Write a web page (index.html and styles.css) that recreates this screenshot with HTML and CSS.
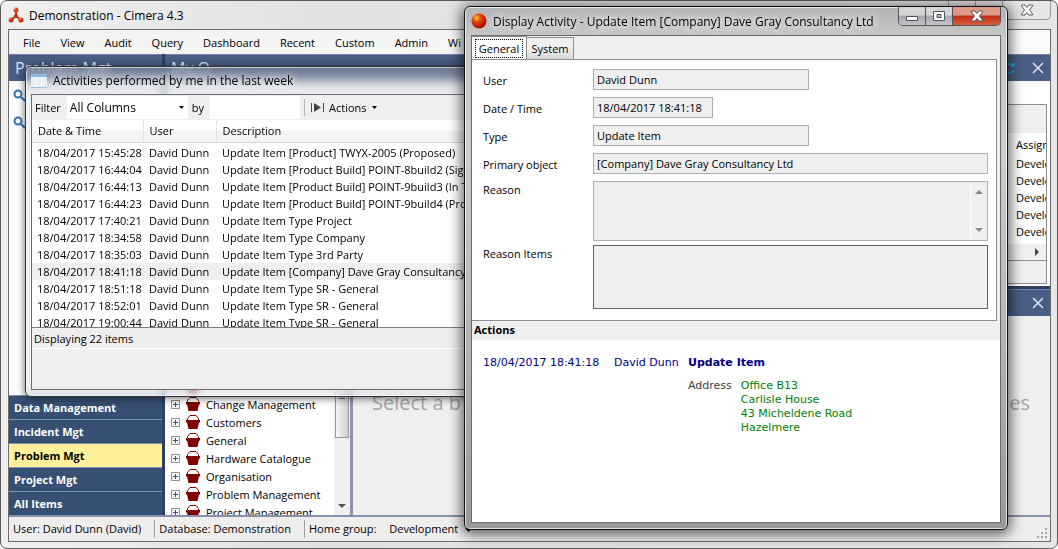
FILE: index.html
```html
<!doctype html>
<html lang="en">
  <head>
    <meta charset="utf-8">
    <meta name="viewport" content="width=device-width">
    <title>Demonstration - Cimera 4.3</title>
    <link rel="stylesheet" href="styles.css">
  </head>
  <body>
    <svg class="defs" width="0" height="0">
      <symbol id="close" viewBox="0 0 14 12">
        <path d="M1.500 1h3.500L7 3.500 9 1h3.500v1L9.500 6l3 4v1H9L7 8.500 5 11H1.500v-1l3-4-3-4z" fill="#fff" stroke="#535666"/>
      </symbol>
      <symbol id="basket" viewBox="0 0 14 14">
        <path d="M1.500 6V3.500L4 .5h6l2.500 3V6" fill="#fff" stroke="#800000"/>
        <path d="M0 5h14v2.500h-1L11.500 14h-9L1 7.500H0z" fill="#800000"/>
      </symbol>
      <symbol id="plus" viewBox="0 0 9 9">
        <path d="M.5.5h8v8h-8z" fill="#f8f8f8" stroke="#919191"/>
        <path d="M2 4.500h5M4.500 2v5" stroke="#3a4c8c"/>
      </symbol>
      <symbol id="search" viewBox="0 0 13 13">
        <circle cx="5" cy="5" r="3.500" fill="none" stroke="#2f74b5" stroke-width="2"/>
        <path d="M8 8l4 4" stroke="#2f74b5" stroke-width="2"/>
      </symbol>
      <symbol id="cross" viewBox="0 0 12 12">
        <path d="M1 1l10 10M11 1L1 11" stroke="#dfe5f2" stroke-width="1.500"/>
      </symbol>
    </svg>

    <div class="main">
      <header class="main-title">
        <svg width="16" height="16" viewBox="0 0 16 16">
          <path d="M8 3v6M8 9l-5 4M8 9l5 4" stroke="#a83a20" stroke-width="2"/>
          <circle cx="8" cy="3" r="2.500" fill="#d8401c"/>
          <circle cx="8" cy="9" r="2" fill="#c83010"/>
          <circle cx="3" cy="13" r="2.500" fill="#d02c10"/>
          <circle cx="13" cy="13" r="2.500" fill="#d02c10"/>
          <circle cx="7" cy="2" r="1" fill="#f4a080"/>
          <circle cx="2" cy="12" r="1" fill="#f4a080"/>
          <circle cx="12" cy="12" r="1" fill="#f4a080"/>
        </svg>
        <span>Demonstration - Cimera 4.3</span>
        <div class="caption-buttons">
          <button aria-label="Minimize"></button>
          <button aria-label="Maximize"></button>
          <button class="wide" aria-label="Close"><svg width="14" height="12"><use href="#close"/></svg></button>
        </div>
      </header>

      <div class="client">
        <nav class="menu">
          <button>File</button>
          <button>View</button>
          <button>Audit</button>
          <button>Query</button>
          <button>Dashboard</button>
          <button>Recent</button>
          <button>Custom</button>
          <button>Admin</button>
          <button>Wi</button>
        </nav>

        <div class="workspace">
          <aside class="sidebar">
            <h2 class="bar">Problem Mgt</h2>
            <div class="searches">
              <svg width="13" height="13"><use href="#search"/></svg>
              <svg width="13" height="13"><use href="#search"/></svg>
            </div>
            <nav class="areas">
              <button>Data Management</button>
              <button>Incident Mgt</button>
              <button class="current">Problem Mgt</button>
              <button>Project Mgt</button>
              <button>All Items</button>
            </nav>
          </aside>

          <div class="panels">
            <section class="queries">
              <h2 class="bar">
                <span>My Q</span>
                <svg class="refresh" width="13" height="13" viewBox="0 0 13 13">
                  <path d="M2 5a5 5 0 0 1 8-2M11 8a5 5 0 0 1-8 2" fill="none" stroke="#3193d1" stroke-width="2"/>
                  <path d="M12 0v5H7zM1 13V8h5z" fill="#3193d1"/>
                </svg>
                <button aria-label="Close panel"><svg width="12" height="12"><use href="#cross"/></svg></button>
              </h2>
              <div class="results">
                <div class="rows">
                  <table>
                    <thead><tr><th>Assign</th></tr></thead>
                    <tbody>
                      <tr><td>Develo</td></tr>
                      <tr><td>Develo</td></tr>
                      <tr><td>Develo</td></tr>
                      <tr><td>Develo</td></tr>
                      <tr><td>Develo</td></tr>
                    </tbody>
                  </table>
                </div>
                <div class="hscroll"><svg width="5" height="8" viewBox="0 0 5 8"><path d="M0 0l4 4-4 4z" fill="#444"/></svg></div>
              </div>
            </section>

            <section class="browser">
              <h2 class="bar">
                <button aria-label="Close panel"><svg width="12" height="12"><use href="#cross"/></svg></button>
              </h2>
              <div class="split">
                <div class="tree">
                  <ul>
                    <li><svg width="9" height="9"><use href="#plus"/></svg><svg width="14" height="14"><use href="#basket"/></svg></li>
                    <li><svg width="9" height="9"><use href="#plus"/></svg><svg width="14" height="14"><use href="#basket"/></svg>Change Management</li>
                    <li><svg width="9" height="9"><use href="#plus"/></svg><svg width="14" height="14"><use href="#basket"/></svg>Customers</li>
                    <li><svg width="9" height="9"><use href="#plus"/></svg><svg width="14" height="14"><use href="#basket"/></svg>General</li>
                    <li><svg width="9" height="9"><use href="#plus"/></svg><svg width="14" height="14"><use href="#basket"/></svg>Hardware Catalogue</li>
                    <li><svg width="9" height="9"><use href="#plus"/></svg><svg width="14" height="14"><use href="#basket"/></svg>Organisation</li>
                    <li><svg width="9" height="9"><use href="#plus"/></svg><svg width="14" height="14"><use href="#basket"/></svg>Problem Management</li>
                    <li><svg width="9" height="9"><use href="#plus"/></svg><svg width="14" height="14"><use href="#basket"/></svg>Project Management</li>
                  </ul>
                  <div class="vscroll">
                    <div class="thumb"><i></i></div>
                    <svg width="8" height="4" viewBox="0 0 8 4"><path d="M0 0h8L4 4z" fill="#555"/></svg>
                  </div>
                </div>
                <div class="hint"><span>Select a b</span><span>ies</span></div>
              </div>
            </section>
          </div>
        </div>

        <footer class="status">
          <span>User: David Dunn (David)</span>
          <span>Database: Demonstration</span>
          <span>Home group: <button>Development <svg width="7" height="4" viewBox="0 0 7 4"><path d="M0 0h7L3.500 4z"/></svg></button></span>
          <svg class="grip" width="11" height="11" viewBox="0 0 11 11">
            <path d="M8 0h2v2H8zM4 4h2v2H4zM8 4h2v2H8zM0 8h2v2H0zM4 8h2v2H4zM8 8h2v2H8z" fill="#a5a5a5"/>
          </svg>
        </footer>
      </div>
    </div>

    <div class="window activities">
      <header>
        <svg width="16" height="16" viewBox="0 0 16 16">
          <path d="M0 1h16v14H0z" fill="#e9eff5"/>
          <path d="M0 1h16v3H0z" fill="#8cb8e4"/>
          <path d="M5 4v11M10.500 4v11" stroke="#fff"/>
          <path d="M0 14.500h16" stroke="#9fc0de"/>
        </svg>
        <span>Activities performed by me in the last week</span>
      </header>
      <div class="client">
        <div class="toolbar">
          <label for="column">Filter</label>
          <div class="pick">
            <select id="column"><option>All Columns</option></select>
            <svg width="5" height="3" viewBox="0 0 5 3"><path d="M0 0h5L2.500 3z"/></svg>
          </div>
          <label for="by">by</label>
          <input id="by" type="text">
          <button>
            <svg width="13" height="11" viewBox="0 0 13 11">
              <path d="M.5 1v9M12.500 1v9" stroke="#444"/>
              <path d="M3 1l7 4.500L3 10z" fill="#444"/>
            </svg>
            Actions
            <svg width="5" height="3" viewBox="0 0 5 3"><path d="M0 0h5L2.500 3z"/></svg>
          </button>
        </div>
        <div class="list">
          <table>
            <thead>
              <tr><th class="when">Date &amp; Time</th><th class="who">User</th><th>Description</th></tr>
            </thead>
            <tbody>
              <tr><td>18/04/2017 15:45:28</td><td>David Dunn</td><td>Update Item [Product] TWYX-2005 (Proposed)</td></tr>
              <tr><td>18/04/2017 16:44:04</td><td>David Dunn</td><td>Update Item [Product Build] POINT-8build2 (Sig</td></tr>
              <tr><td>18/04/2017 16:44:13</td><td>David Dunn</td><td>Update Item [Product Build] POINT-9build3 (In T</td></tr>
              <tr><td>18/04/2017 16:44:23</td><td>David Dunn</td><td>Update Item [Product Build] POINT-9build4 (Pro</td></tr>
              <tr><td>18/04/2017 17:40:21</td><td>David Dunn</td><td>Update Item Type Project</td></tr>
              <tr><td>18/04/2017 18:34:58</td><td>David Dunn</td><td>Update Item Type Company</td></tr>
              <tr><td>18/04/2017 18:35:03</td><td>David Dunn</td><td>Update Item Type 3rd Party</td></tr>
              <tr class="selected"><td>18/04/2017 18:41:18</td><td>David Dunn</td><td>Update Item [Company] Dave Gray Consultancy</td></tr>
              <tr><td>18/04/2017 18:51:18</td><td>David Dunn</td><td>Update Item Type SR - General</td></tr>
              <tr><td>18/04/2017 18:52:01</td><td>David Dunn</td><td>Update Item Type SR - General</td></tr>
              <tr><td>18/04/2017 19:00:44</td><td>David Dunn</td><td>Update Item Type SR - General</td></tr>
            </tbody>
          </table>
        </div>
        <p class="count">Displaying 22 items</p>
      </div>
    </div>

    <div class="window dialog">
      <header>
        <svg width="16" height="16" viewBox="0 0 16 16">
          <defs>
            <radialGradient id="ball" cx="35%" cy="30%" r="70%">
              <stop offset="0" stop-color="#ffd23c"/>
              <stop offset=".4" stop-color="#e8400c"/>
              <stop offset="1" stop-color="#a80c00"/>
            </radialGradient>
          </defs>
          <circle cx="8" cy="8" r="7.500" fill="url(#ball)"/>
        </svg>
        <span>Display Activity - Update Item [Company] Dave Gray Consultancy Ltd</span>
        <div class="caption-buttons">
          <button aria-label="Minimize"><svg width="14" height="12" viewBox="0 0 14 12"><path d="M1.500 6.500h11v4h-11z" fill="#fff" stroke="#535666"/></svg></button>
          <button aria-label="Maximize"><svg width="14" height="12" viewBox="0 0 14 12"><path d="M1.500 1.500h11v9h-11zM5 4.500v3h4v-3z" fill="#fff" fill-rule="evenodd" stroke="#535666"/></svg></button>
          <button class="wide red" aria-label="Close"><svg width="14" height="12"><use href="#close"/></svg></button>
        </div>
      </header>
      <div class="client">
        <div class="tabs">
          <button class="active"><span>General</span></button>
          <button>System</button>
        </div>
        <form class="details">
          <label for="user">User</label>
          <input id="user" class="medium" value="David Dunn" readonly>
          <label for="time">Date / Time</label>
          <input id="time" class="short" value="18/04/2017 18:41:18" readonly>
          <label for="type">Type</label>
          <input id="type" class="medium" value="Update Item" readonly>
          <label for="object">Primary object</label>
          <input id="object" value="[Company] Dave Gray Consultancy Ltd" readonly>
          <label for="reason" class="top">Reason</label>
          <div class="reason">
            <textarea id="reason" readonly></textarea>
            <div class="vscroll">
              <svg width="8" height="4" viewBox="0 0 8 4"><path d="M0 4h8L4 0z" fill="#888"/></svg>
              <svg width="8" height="4" viewBox="0 0 8 4"><path d="M0 0h8L4 4z" fill="#888"/></svg>
            </div>
          </div>
          <label for="items" class="top">Reason Items</label>
          <textarea id="items" class="items" readonly></textarea>
        </form>
        <h3>Actions</h3>
        <div class="log">
          <span>18/04/2017 18:41:18</span>
          <span>David Dunn</span>
          <div>
            <b>Update Item</b>
            <dl>
              <dt>Address</dt>
              <dd>Office B13<br>Carlisle House<br>43 Micheldene Road<br>Hazelmere</dd>
            </dl>
          </div>
        </div>
      </div>
    </div>
  </body>
</html>
```
FILE: styles.css
```css
* {
  box-sizing: border-box;
}
body {
  margin: 0;
  height: 100vh;
  overflow: hidden;
  position: relative;
  font-family: "Open Sans", sans-serif;
  font-size: 11px;
  line-height: 17px;
  color: #000;
}
button, input, select, textarea {
  font: inherit;
  color: inherit;
  margin: 0;
  padding: 0;
  border: 0;
  border-radius: 0;
  background: none;
}
button {
  white-space: nowrap;
}
h2, h3, p, ul, dl, dd {
  margin: 0;
  padding: 0;
}
svg {
  flex: none;
}
.defs {
  position: absolute;
}
table {
  border-collapse: collapse;
}
th, td {
  font-weight: normal;
  text-align: left;
  white-space: nowrap;
}
.client {
  display: flex;
  flex-direction: column;
  min-height: 0;
  flex: 1;
  border: 1px solid #6b6b6b;
}

/* main window */
.main {
  height: 100%;
  display: flex;
  flex-direction: column;
  padding: 0 6px 6px 7px;
  border: 1px solid #5a5a5a;
  border-radius: 7px;
  background: linear-gradient(90deg, #f0f0f0, #e2e2e2 30%, #e6e6e6);
}
.main > .client {
  background: #efefef;
}
.main-title {
  display: flex;
  align-items: center;
  gap: 5px;
  height: 28px;
  font-size: 12px;
}
.caption-buttons {
  display: flex;
  align-self: flex-start;
  margin-left: auto;
  border: 1px solid #9a9a9a;
  border-top: 0;
  border-radius: 0 0 5px 5px;
  overflow: hidden;
}
.caption-buttons button {
  display: flex;
  align-items: center;
  justify-content: center;
  width: 27px;
  height: 18px;
  border-right: 1px solid #9a9a9a;
}
.caption-buttons .wide {
  width: 47px;
  border-right: 0;
}
.menu {
  display: flex;
  gap: 20px;
  height: 24px;
  padding-left: 14px;
  background: linear-gradient(90deg, #f2f2f2, #fbfbfb);
}
.workspace {
  flex: 1;
  min-height: 0;
  display: flex;
  background: #2d3f66;
  border-bottom: 2px solid #8790ac;
}
.bar {
  display: flex;
  align-items: center;
  height: 27px;
  padding: 0 6px;
  font-size: 16px;
  font-weight: normal;
  color: #dfe5f2;
  background: #4a5d84;
  border-top: 1px solid #7484a8;
}
.bar button {
  display: flex;
  margin-left: auto;
}
.bar .refresh {
  margin-left: auto;
}
.refresh + button {
  margin-left: 16px;
}
.sidebar {
  display: flex;
  flex-direction: column;
  width: 153px;
  margin-right: 3px;
  background: #fff;
}
.searches {
  flex: 1;
  display: flex;
  flex-direction: column;
  gap: 14px;
  padding: 8px 4px;
}
.areas {
  display: flex;
  flex-direction: column;
}
.areas button {
  height: 24px;
  padding-left: 5px;
  text-align: left;
  font-weight: bold;
  color: #fff;
  background: #364f72;
  border-top: 1px solid #8292b4;
}
.areas .current {
  color: #000;
  background: #fff099;
}
.panels {
  flex: 1;
  min-width: 0;
  display: flex;
  flex-direction: column;
}
.queries {
  height: 232px;
  margin-bottom: 3px;
  background: #fff;
}
.results {
  display: flex;
  flex-direction: column;
  height: 180px;
  margin: 23px 3px 0;
  padding-top: 28px;
  border: 1px solid #8c8c94;
  background: #efefef;
}
.rows {
  display: flex;
  justify-content: flex-end;
  align-items: flex-start;
  height: 111px;
  background: #fff;
}
.results table {
  width: 30px;
  table-layout: fixed;
}
.results tr > * {
  height: 17px;
  padding: 0;
  overflow: hidden;
}
.results th {
  height: 22px;
}
.hscroll {
  display: flex;
  justify-content: flex-end;
  align-items: center;
  height: 17px;
  padding-right: 6px;
  border-bottom: 1px solid #8c8c94;
}
.browser {
  flex: 1;
  min-height: 0;
  display: flex;
  flex-direction: column;
}
.split {
  flex: 1;
  min-height: 0;
  display: flex;
  background: #efefef;
}
.tree {
  display: flex;
  width: 188px;
  overflow: hidden;
  background: #fff;
  border-right: 3px solid #8a94b4;
}
.tree ul {
  flex: 1;
  padding: 61px 0 0 6px;
  list-style: none;
  white-space: nowrap;
}
.tree li {
  display: flex;
  align-items: center;
  gap: 6px;
  height: 18px;
}
.vscroll {
  display: flex;
  flex-direction: column;
  align-items: center;
  justify-content: space-between;
  width: 16px;
  background: #f0f0f0;
}
.tree .vscroll {
  padding-bottom: 7px;
}
.thumb {
  display: flex;
  align-items: center;
  width: 14px;
  height: 122px;
  padding: 69px 3px 0;
  border: 1px solid #999;
  background: linear-gradient(90deg, #f5f5f5, #d0d0d0);
}
.thumb i {
  flex: 1;
  height: 5px;
  margin-bottom: 30px;
  border: solid #666;
  border-width: 1px 0;
}
.hint {
  flex: 1;
  display: flex;
  justify-content: space-between;
  padding: 73px 20px 0 19px;
  font-size: 20px;
  line-height: 28px;
  color: #a5a5a5;
}
.status {
  display: flex;
  align-items: center;
  height: 24px;
  background: #f0eded;
}
.status > span {
  padding: 0 13px 0 4px;
  line-height: 18px;
}
.status > span + span {
  border-left: 1px solid #a0a0a0;
}
.status button {
  margin-left: 10px;
}
.status button svg {
  vertical-align: middle;
  margin-left: 4px;
}
.grip {
  margin: auto 2px 2px auto;
}

/* floating windows */
.window {
  position: absolute;
  display: flex;
  flex-direction: column;
  border: 1px solid #333;
  border-radius: 6px;
}
.window > header {
  display: flex;
  align-items: center;
  gap: 6px;
  font-size: 12px;
  text-shadow: 0 0 8px #fff, 0 0 8px #fff;
}
.window > .client {
  background: #efefef;
}
.activities {
  left: 25px;
  top: 66px;
  width: 640px;
  height: 331px;
  padding: 0 6px 6px 5px;
  background: linear-gradient(rgba(140, 148, 160, .5), rgba(225, 228, 235, .6) 28px, rgba(225, 228, 235, .6));
  backdrop-filter: blur(4px);
  box-shadow: 0 1px 8px rgba(0, 0, 0, .6), inset 0 0 0 1px rgba(255, 255, 255, .6);
}
.activities > header {
  height: 27px;
}
.toolbar {
  display: flex;
  align-items: center;
  height: 25px;
  padding-left: 3px;
}
.pick {
  display: flex;
  align-items: center;
  width: 121px;
  height: 23px;
  margin: 0 4px 0 6px;
  padding-right: 4px;
  background: #fff;
}
.pick select {
  flex: 1;
  appearance: none;
  padding-left: 3px;
  font-size: 12px;
}
.toolbar input {
  width: 90px;
  height: 23px;
  margin: 0 4px 0 6px;
  background: #fff;
}
.toolbar button {
  display: flex;
  align-items: center;
  gap: 5px;
  padding-left: 6px;
  border-left: 1px solid #b5b5b5;
}
.list {
  height: 208px;
  overflow: hidden;
  background: #fff;
  border-bottom: 1px solid #7d7d7d;
}
.list table {
  width: 100%;
}
.list tr > * {
  height: 17px;
  padding: 0 0 0 6px;
}
.list td:first-child {
  padding-left: 5px;
}
.list th {
  height: 22px;
  background: linear-gradient(#fff 50%, #f3f4f6 50%);
  border-right: 1px solid #e0e3e8;
  border-bottom: 1px solid #d5d5d5;
}
.list tbody::before {
  content: "";
  display: block;
  height: 1px;
}
.when {
  width: 111px;
}
.who {
  width: 73px;
}
.selected {
  background: #efefef;
}
.count {
  padding: 2px 2px 1px;
  background: #f0eded;
  border-bottom: 1px solid #fff;
}

.dialog {
  left: 464px;
  top: 6px;
  width: 544px;
  height: 524px;
  padding: 0 6px 6px;
  border-color: #111;
  background: linear-gradient(#b4b4b4, #c8c8c8 30px, #ccc 150px, #999);
  box-shadow: 0 2px 14px 2px rgba(0, 0, 0, .65), inset 0 0 0 1px rgba(255, 255, 255, .7);
}
.dialog > header {
  height: 28px;
}
.dialog .caption-buttons {
  border-color: #555;
}
.dialog .caption-buttons button {
  border-color: #555;
  background: linear-gradient(#d5d5d5 45%, #a5a8ac 50%, #c5c5c5);
}
.dialog .caption-buttons .red {
  background: linear-gradient(#dd9a88 45%, #c02a10 50%, #d86040);
}
.tabs {
  display: flex;
  align-items: flex-end;
  height: 23px;
}
.tabs button {
  height: 22px;
  width: 47px;
  border: 1px solid #8c8e94;
  border-left: 0;
  border-bottom: 0;
  background: linear-gradient(#f0f0f0 45%, #d8d8d8);
}
.tabs .active {
  width: 55px;
  height: 23px;
  padding: 2px 3px;
  background: #fff;
}
.tabs .active span {
  display: block;
  border: 1px dotted #000;
}
.details {
  display: grid;
  grid-template-columns: 110px 1fr;
  row-gap: 7px;
  margin-right: 3px;
  padding: 9px 8px 11px 11px;
  background: #fff;
  border: solid #8c8e94;
  border-width: 1px 1px 1px 0;
}
.details label {
  padding-top: 3px;
}
.details .top {
  padding-top: 0;
}
.details input {
  width: 100%;
  height: 21px;
  padding: 0 3px;
  background: #efefef;
  border: 1px solid #abadb3;
}
.details .medium {
  width: 216px;
}
.details .short {
  width: 120px;
}
.reason {
  display: flex;
  height: 60px;
  margin-bottom: -3px;
  padding: 1px;
  background: #efefef;
  border: 1px solid #abadb3;
}
.reason textarea {
  flex: 1;
  resize: none;
}
.reason .vscroll {
  padding: 7px 0;
  border-left: 1px solid #fff;
}
.items {
  display: block;
  width: 100%;
  height: 64px;
  background: #efefef;
  border: 1px solid #646464;
  resize: none;
}
.dialog h3 {
  padding: 0 2px 2px;
  font-size: 11px;
}
.log {
  flex: 1;
  display: grid;
  grid-template-columns: 121px 64px 1fr;
  column-gap: 10px;
  padding: 14px 11px;
  font-family: "DejaVu Sans", sans-serif;
  white-space: nowrap;
  color: #000080;
  background: #fff;
}
.log dl {
  display: flex;
  gap: 9px;
  margin-top: 8px;
  line-height: 14px;
}
.log dt {
  color: #404040;
}
.log dd {
  color: #008000;
}
```
